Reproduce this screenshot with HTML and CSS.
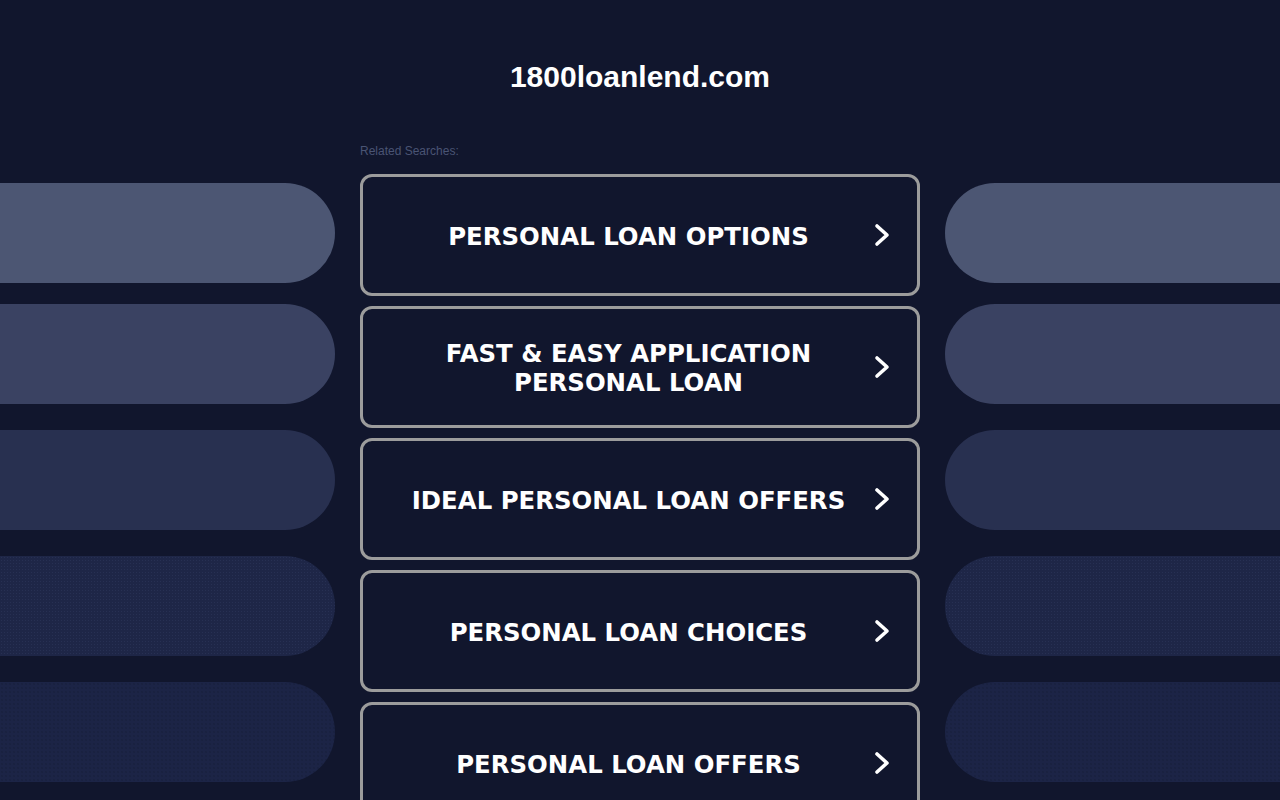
FILE: index.html
```html
<!DOCTYPE html>
<html lang="en">
<head>
<meta charset="utf-8">
<title>1800loanlend.com</title>
<link rel="stylesheet" href="styles.css">
</head>
<body>
<div class="page">
  <div class="side side-left">
    <div class="pill pill-1"></div>
    <div class="pill pill-2 pill-tight"></div>
    <div class="pill pill-3"></div>
    <div class="pill pill-4"></div>
    <div class="pill pill-5"></div>
  </div>
  <main class="main">
    <h1 class="title">1800loanlend.com</h1>
    <div class="related">Related Searches:</div>
    <ul class="links">
      <li><a class="link" href="#"><span class="label">PERSONAL LOAN OPTIONS</span><svg class="chev" viewBox="0 0 16 24" width="16" height="24"><polyline points="3,3 13,12 3,21"/></svg></a></li>
      <li><a class="link" href="#"><span class="label">FAST &amp; EASY APPLICATION PERSONAL LOAN</span><svg class="chev" viewBox="0 0 16 24" width="16" height="24"><polyline points="3,3 13,12 3,21"/></svg></a></li>
      <li><a class="link" href="#"><span class="label">IDEAL PERSONAL LOAN OFFERS</span><svg class="chev" viewBox="0 0 16 24" width="16" height="24"><polyline points="3,3 13,12 3,21"/></svg></a></li>
      <li><a class="link" href="#"><span class="label">PERSONAL LOAN CHOICES</span><svg class="chev" viewBox="0 0 16 24" width="16" height="24"><polyline points="3,3 13,12 3,21"/></svg></a></li>
      <li><a class="link" href="#"><span class="label">PERSONAL LOAN OFFERS</span><svg class="chev" viewBox="0 0 16 24" width="16" height="24"><polyline points="3,3 13,12 3,21"/></svg></a></li>
    </ul>
  </main>
  <div class="side side-right">
    <div class="pill pill-1"></div>
    <div class="pill pill-2 pill-tight"></div>
    <div class="pill pill-3"></div>
    <div class="pill pill-4"></div>
    <div class="pill pill-5"></div>
  </div>
</div>
</body>
</html>
```
FILE: styles.css
```css
html, body {
  margin: 0;
  padding: 0;
  background: #11162d;
  height: 100%;
  overflow: hidden;
}
.page {
  display: grid;
  grid-template-columns: 1fr 560px 1fr;
  column-gap: 25px;
  height: 800px;
}
.side {
  display: flex;
  flex-direction: column;
  gap: 26px;
  padding-top: 183px;
}
.pill {
  height: 100px;
  flex: none;
}
.pill-tight {
  margin-top: -5px;
}
.side-left .pill {
  border-radius: 0 50px 50px 0;
}
.side-right .pill {
  border-radius: 50px 0 0 50px;
}
.pill-1 { background: #4c5673; }
.pill-2 { background: #3a4262; }
.pill-3 { background: #283050; }
.pill-4 {
  background-color: #1e2647;
  background-image: radial-gradient(rgba(60, 72, 110, 0.3) 0.6px, transparent 0.8px);
  background-size: 3px 3px;
}
.pill-5 {
  background-color: #1c2446;
  background-image: radial-gradient(rgba(16, 22, 45, 0.45) 0.6px, transparent 0.8px);
  background-size: 4px 4px;
}
.main {
  display: flex;
  flex-direction: column;
}
.title {
  margin: 0;
  padding-top: 59px;
  font-family: "Liberation Sans", Arial, sans-serif;
  font-weight: bold;
  font-size: 30px;
  line-height: 36px;
  color: #ffffff;
  text-align: center;
}
.related {
  margin-top: 49px;
  font-family: "Liberation Sans", Arial, sans-serif;
  font-size: 12px;
  line-height: 14px;
  color: #4a5474;
}
.links {
  list-style: none;
  margin: 16px 0 0;
  padding: 0;
  display: flex;
  flex-direction: column;
  gap: 10px;
}
.link {
  box-sizing: border-box;
  height: 122px;
  display: flex;
  align-items: center;
  border: 3px solid #9c9c9c;
  border-radius: 12px;
  padding: 2px 27px 0 20px;
  text-decoration: none;
  color: #ffffff;
}
.label {
  flex: 1;
  text-align: center;
  font-family: "DejaVu Sans", Verdana, sans-serif;
  font-weight: bold;
  font-size: 24.4px;
  line-height: 29px;
  padding: 0 16px;
}
.chev {
  flex: none;
  margin-top: -2px;
  fill: none;
  stroke: #ffffff;
  stroke-width: 3.6;
  stroke-linecap: round;
  stroke-linejoin: round;
}
```
